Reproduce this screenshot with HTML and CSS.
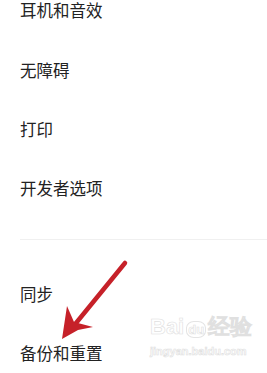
FILE: index.html
```html
<!DOCTYPE html>
<html>
<head>
    <title>设置</title>
    <link rel="stylesheet" href="styles.css">
</head>
<body>
    <div id="settings">
        <ul class="group">
            <li class="item top">耳机和音效</li>
            <li class="item">无障碍</li>
            <li class="item">打印</li>
            <li class="item">开发者选项</li>
        </ul>

        <div class="divider"></div>

        <ul class="group">
            <li class="item">同步</li>
            <li class="item">备份和重置</li>
        </ul>
    </div>

    <!-- red arrow pointing at the backup item -->
    <svg class="arrow" width="267" height="373" viewBox="0 0 267 373">
        <line x1="125" y1="263" x2="72" y2="328" stroke="#c62129" stroke-width="4.5" stroke-linecap="round"/>
        <path d="M62 339 L67 306 L74 322 L93 327 L78 330 Z" fill="#c62129"/>
    </svg>

    <div class="watermark">
        <div class="wm-logo">Bai<span class="wm-du">du</span>经验</div>
        <div class="wm-url">jingyan.baidu.com</div>
    </div>
</body>
</html>
```

FILE: styles.css
```css
body {
    font-family: "Noto Sans CJK SC", "Noto Sans", sans-serif;
    background-color: #fff;
    color: #222;
    margin: 0;
    padding: 0;
    overflow: hidden;
}

ul {
    list-style: none;
    margin: 0;
    padding: 0;
}

.item {
    height: 59px;
    display: flex;
    align-items: center;
    padding-left: 20px;
    font-size: 16.5px;
    line-height: 20px;
}

/* first row is scrolled partly out of view */
.item.top {
    height: 20px;
    padding-bottom: 20px;
    align-items: flex-end;
}

.divider {
    height: 1px;
    margin: 22px 0 24px 20px;
    background-color: #f0f0f0;
}

.arrow {
    position: absolute;
    top: 0;
    left: 0;
}

.watermark {
    position: absolute;
    left: 150px;
    top: 314px;
    color: #fff;
    font-family: "Liberation Sans", Arial, sans-serif;
    -webkit-text-stroke: 0.6px #e0e0e0;
}

.wm-logo {
    font-size: 22px;
    font-weight: bold;
    line-height: 26px;
}

.wm-du {
    font-size: 13px;
    border: 1px solid #e4e4e4;
    border-radius: 40%;
    padding: 0 1px;
    margin: 0 2px;
}

.wm-url {
    font-size: 11px;
    font-weight: bold;
    line-height: 16px;
}
```
